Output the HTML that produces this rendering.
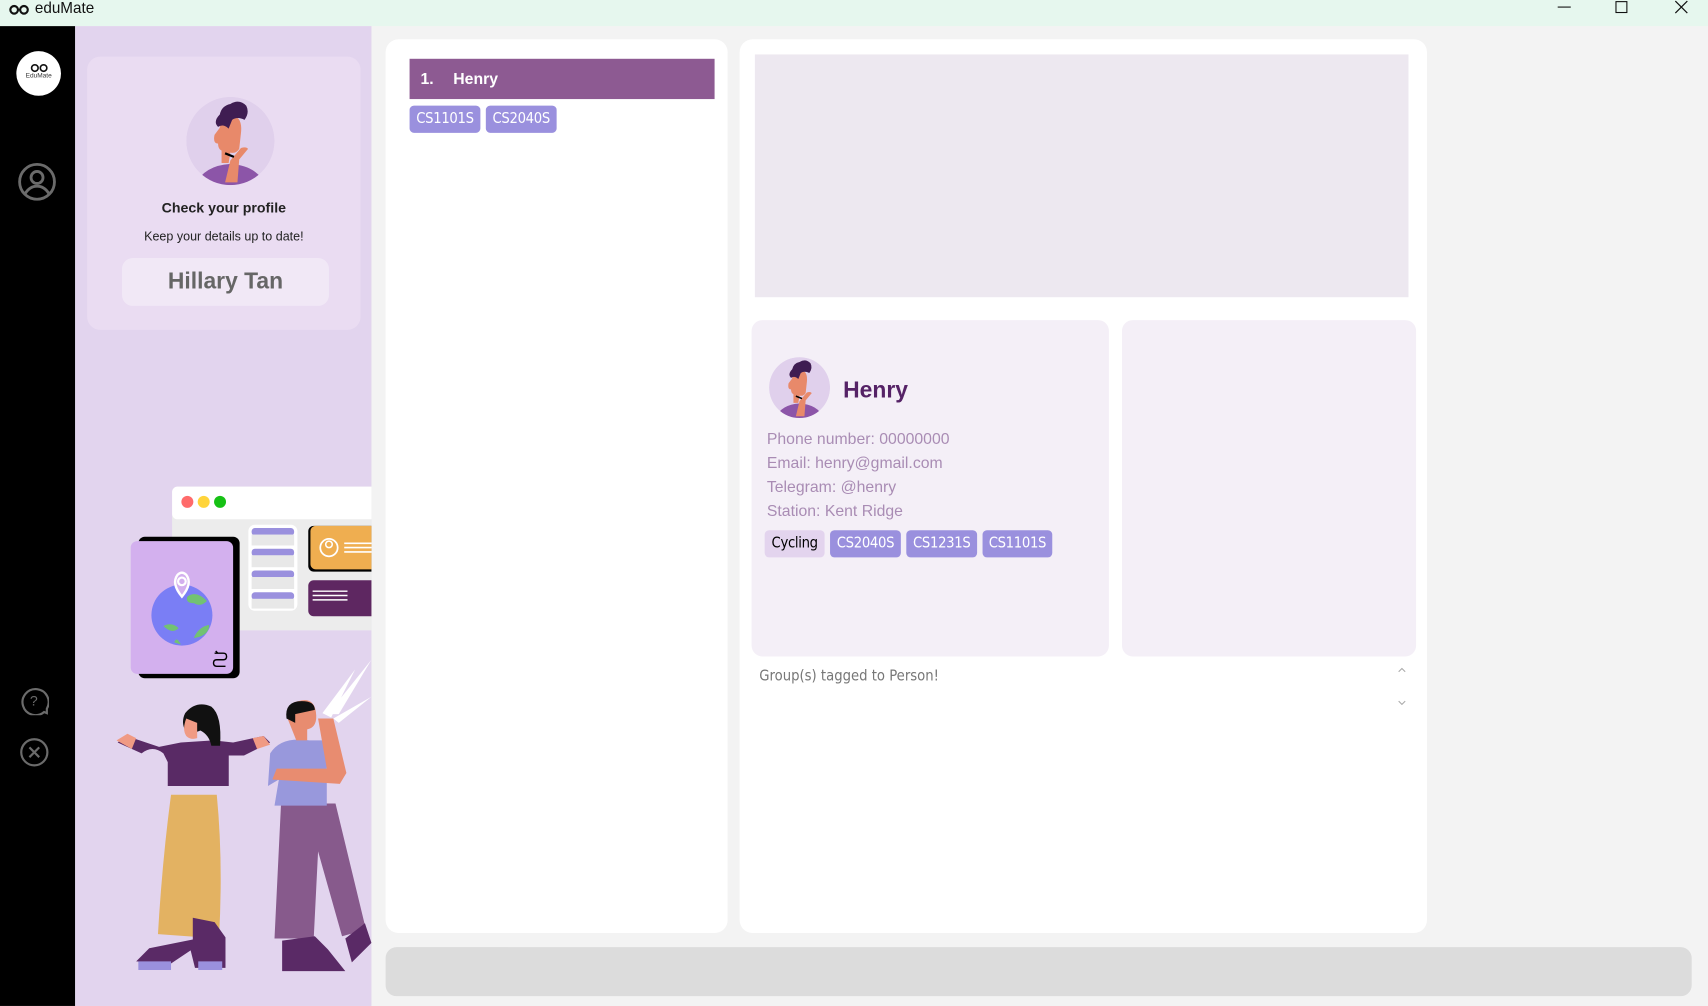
<!DOCTYPE html>
<html><head><meta charset="utf-8"><style>
*{margin:0;padding:0;box-sizing:border-box}
html,body{width:1708px;height:1006px;overflow:hidden;background:#f3f3f3;font-family:"Liberation Sans",sans-serif}
#w{position:absolute;left:0;top:0;width:1568px;height:924px;transform:scale(1.0893,1.0887);transform-origin:0 0}
.a{position:absolute}
.tag{position:absolute;height:25px;border-radius:4px;background:#9a90de;color:#fff;font-size:13.5px;line-height:25px;text-align:center;font-family:"DejaVu Sans Condensed","Liberation Sans",sans-serif;letter-spacing:-0.3px}
.info{position:absolute;left:704px;font-size:14.5px;color:#a98cb4;top:0}
</style></head><body><div id="w">
<div class="a" style="left:0;top:0;width:1568px;height:24px;background:#e6f7ee"></div>
<svg class="a" style="left:8px;top:3px" width="20" height="12" viewBox="0 0 20 12"><circle cx="5" cy="6" r="3.5" fill="none" stroke="#111" stroke-width="2"/><circle cx="14" cy="6" r="3.5" fill="none" stroke="#111" stroke-width="2"/><path d="M8 6h3" stroke="#111" stroke-width="1.5"/></svg>
<div class="a" style="left:32px;top:0;font-size:14px;line-height:15px;color:#111">eduMate</div>
<div class="a" style="left:1430px;top:6px;width:12px;height:1px;background:#111"></div>
<div class="a" style="left:1483px;top:1px;width:11px;height:11px;border:1px solid #111"></div>
<svg class="a" style="left:1537px;top:0" width="13" height="13"><path d="M1 1L12 12M12 1L1 12" stroke="#111" stroke-width="1.1"/></svg>
<div class="a" style="left:0;top:24px;width:69px;height:900px;background:#000"></div>
<div class="a" style="left:15px;top:47px;width:41px;height:41px;border-radius:50%;background:#fff"></div>
<svg class="a" style="left:28px;top:58px" width="16" height="9"><circle cx="4" cy="4.5" r="3" fill="none" stroke="#111" stroke-width="1.5"/><circle cx="12" cy="4.5" r="3" fill="none" stroke="#111" stroke-width="1.5"/></svg>
<div class="a" style="left:15px;top:67px;width:41px;text-align:center;font-size:6px;color:#333">EduMate</div>
<svg class="a" style="left:16px;top:149px" width="36" height="36" viewBox="0 0 36 36" fill="none" stroke="#6b6b6b" stroke-width="2.6"><circle cx="18" cy="18" r="16"/><circle cx="18" cy="14" r="5.5"/><path d="M7 29c3-5 7-7 11-7s8 2 11 7"/></svg>
<svg class="a" style="left:17px;top:629px" width="28" height="28" viewBox="0 0 28 28" fill="none" stroke="#6b6b6b" stroke-width="2"><path d="M26 26l-2.5-1A12 12 0 1 1 26 22z"/><text x="14" y="19" font-size="13" fill="#6b6b6b" stroke="none" text-anchor="middle" font-family="Liberation Sans">?</text></svg>
<svg class="a" style="left:18px;top:677px" width="28" height="28" viewBox="0 0 28 28" fill="none" stroke="#6b6b6b" stroke-width="2"><circle cx="13.5" cy="14" r="12"/><path d="M9 9.5l9 9M18 9.5l-9 9"/></svg>
<div class="a" style="left:69px;top:24px;width:272px;height:900px;background:#e2d4ee"></div>
<div class="a" style="left:80px;top:52px;width:251px;height:251px;border-radius:12px;background:#eadcf2"></div>
<svg class="a" style="left:171px;top:88px" width="81" height="83" viewBox="0 0 100 100"><defs><clipPath id="c1"><circle cx="50" cy="50" r="50"/></clipPath></defs><g clip-path="url(#c1)"><circle cx="50" cy="50" r="50" fill="#e0d0ec"/><path d="M10 100q10-22 40-24q30 2 40 24z" fill="#8c55a8"/><path d="M38 35q0-15 14-14q12 2 10 20l-2 18q-4 6-10 4l-2 12-8 0 0-14q-4-2-4-8q-6 0-4-10z" fill="#e8896a"/><path d="M50 72l12-14q6-2 8 1l-10 12-2 26-14 0z" fill="#e8896a"/><path d="M36 34q-6-6 2-14q2-10 12-12q10-6 18 2q4 8-2 16q-8-4-14 0l-4 10q-6-6-12-2z" fill="#3f1d52"/><path d="M44 64l10 4" stroke="#000" stroke-width="2.5"/></g></svg>
<div class="a" style="left:80px;top:183px;width:251px;text-align:center;font-size:13px;font-weight:bold;color:#222">Check your profile</div>
<div class="a" style="left:80px;top:212px;width:251px;text-align:center;font-size:11.5px;color:#222">Keep your details up to date!</div>
<div class="a" style="left:112px;top:237px;width:190px;height:44px;border-radius:10px;background:#f1e8f6;text-align:center;line-height:44px;font-size:21px;font-weight:bold;color:#666">Hillary Tan</div>
<svg class="a" style="left:69px;top:440px" width="272" height="484" viewBox="69 440 272 484">
<rect x="158" y="447" width="200" height="132" rx="5" fill="#ececec"/>
<rect x="158" y="447" width="200" height="30" rx="5" fill="#fff"/>
<circle cx="172" cy="461" r="5.5" fill="#ff6b6b"/><circle cx="187" cy="461" r="5.5" fill="#ffd43a"/><circle cx="202" cy="461" r="5.5" fill="#16c115"/>
<rect x="228" y="482" width="45" height="79" rx="6" fill="#fff"/>
<g fill="#9a90de"><rect x="231" y="485" width="39" height="7" rx="3"/><rect x="231" y="504" width="39" height="7" rx="3"/><rect x="231" y="524" width="39" height="7" rx="3"/><rect x="231" y="544" width="39" height="7" rx="3"/></g>
<g fill="#e8e8e8"><rect x="231" y="491" width="39" height="10"/><rect x="231" y="510" width="39" height="11"/><rect x="231" y="530" width="39" height="11"/><rect x="231" y="550" width="39" height="9"/></g>
<rect x="283" y="483" width="70" height="42" rx="5" fill="#000"/><rect x="285" y="483" width="70" height="40" rx="5" fill="#efae50"/>
<circle cx="302" cy="503" r="8" fill="none" stroke="#fff" stroke-width="1.6"/><circle cx="302" cy="500" r="3" fill="none" stroke="#fff" stroke-width="1.4"/>
<path d="M316 499h30M316 503h30M316 507h30" stroke="#fff" stroke-width="1.5"/>
<rect x="283" y="533" width="70" height="33" rx="5" fill="#5e2761"/><path d="M287 543h32M287 547h32M287 551h32" stroke="#fff" stroke-width="1.3"/>
<rect x="127" y="493" width="93" height="130" rx="6" fill="#000"/>
<rect x="120" y="497" width="94" height="122" rx="6" fill="#d3b0ee"/>
<circle cx="167" cy="565" r="28" fill="#7a7ef5"/>
<path d="M150 575q8-4 14 2q-6 6-14-2zM160 590q2-6 6 2zM172 548q8-6 18 4q-6 6-12 2q-8 0-6-6zM178 586q4-10 14-12q0 10-14 12z" fill="#72c272"/>
<path d="M167 548q-10-12-4-20q4-4 8 0q6 8-4 20z" fill="#d3b0ee" stroke="#fff" stroke-width="2.2"/><circle cx="167" cy="534" r="3.5" fill="none" stroke="#fff" stroke-width="2"/>
<path d="M197 600h8q3 0 3 3t-3 3h-6q-3 0-3 3t3 3h8M200 600l-2-2" fill="none" stroke="#000" stroke-width="1.3"/>
<path d="M296 655l30-40-22 44zM301 656l40-50-30 50zM306 660l35-20-30 24z" fill="#fff"/>
<path d="M157 730q-8 60-12 128l56 4q4-70-2-132z" fill="#e3b262"/>
<path d="M177 843l0 20-40 8-12 12 32 2 18-12 4 16 28 0 0-28-10-14z" fill="#5a2a66"/>
<path d="M127 883h30v8h-30zM182 883h22v8h-22z" fill="#9a90de"/>
<path d="M150 692q-10-8-20 0l-22-10 8-6 30 10 20-4 30-2 18 2 28-6 6 6-24 12-14 0 0 28-56 0 0-22z" fill="#592a65"/>
<path d="M107 680l10-6 8 4-4 10zM232 678l10-2 6 8-12 4z" fill="#f09a84"/>
<path d="M170 655q10-12 24-6q10 8 8 36l-8 0q-2-10-10-14q-10 4-14 0q-4-8 0-16z" fill="#111"/>
<path d="M171 660q-4 10 0 16q4 4 10 2l0-14z" fill="#f09a84"/>
<path d="M258 738l-6 124 36 0 4-80 22 78 22-6-28-116z" fill="#875a8c"/>
<path d="M259 864l30-4 12 12 16 20-58 0zM317 862l18-14 6 18-18 18z" fill="#5a2a66"/>
<path d="M248 692q10-16 36-12l16 0 0 60-48 0 4-24-10 6z" fill="#9898dc"/>
<path d="M250 716l62 4 6-10-12-50-14 0 8 46-46 0z" fill="#e88c70"/>
<path d="M264 660q-2-14 10-16q14-4 16 10q2 14-8 16l0 10-10 0z" fill="#e88c70"/>
<path d="M263 660q-2-16 14-16q12 0 12 8l-18 4 0 8z" fill="#111"/>
</svg>
<div class="a" style="left:354px;top:36px;width:314px;height:821px;border-radius:12px;background:#fff"></div>
<div class="a" style="left:376px;top:54px;width:280px;height:37px;background:#8d5a92;color:#fff;font-weight:bold;font-size:14.5px;line-height:38px"><span style="margin-left:10px">1.</span><span style="margin-left:18px">Henry</span></div>
<div class="tag" style="left:376px;top:97px;width:65px">CS1101S</div>
<div class="tag" style="left:446px;top:97px;width:65px">CS2040S</div>
<div class="a" style="left:679px;top:36px;width:631px;height:821px;border-radius:12px;background:#fff"></div>
<div class="a" style="left:693px;top:50px;width:600px;height:223px;background:#ede8f0"></div>
<div class="a" style="left:690px;top:294px;width:328px;height:309px;border-radius:10px;background:#f4eff7"></div>
<div class="a" style="left:1030px;top:294px;width:270px;height:309px;border-radius:10px;background:#f4eff7"></div>
<svg class="a" style="left:706px;top:327px" width="56" height="58" viewBox="0 0 100 100"><defs><clipPath id="c2"><circle cx="50" cy="50" r="50"/></clipPath></defs><g clip-path="url(#c2)"><circle cx="50" cy="50" r="50" fill="#e0d0ec"/><path d="M10 100q10-22 40-24q30 2 40 24z" fill="#8c55a8"/><path d="M38 35q0-15 14-14q12 2 10 20l-2 18q-4 6-10 4l-2 12-8 0 0-14q-4-2-4-8q-6 0-4-10z" fill="#e8896a"/><path d="M50 72l12-14q6-2 8 1l-10 12-2 26-14 0z" fill="#e8896a"/><path d="M36 34q-6-6 2-14q2-10 12-12q10-6 18 2q4 8-2 16q-8-4-14 0l-4 10q-6-6-12-2z" fill="#3f1d52"/><path d="M44 64l10 4" stroke="#000" stroke-width="2.5"/></g></svg>
<div class="a" style="left:774px;top:347px;font-size:21px;font-weight:bold;color:#552266">Henry</div>
<div class="info" style="top:396px">Phone number: 00000000</div>
<div class="info" style="top:418px">Email: henry@gmail.com</div>
<div class="info" style="top:440px">Telegram: @henry</div>
<div class="info" style="top:462px">Station: Kent Ridge</div>
<div class="tag" style="left:702px;top:487px;width:55px;background:#e3d4ee;color:#000">Cycling</div>
<div class="tag" style="left:762px;top:487px;width:65px">CS2040S</div>
<div class="tag" style="left:832px;top:487px;width:65px">CS1231S</div>
<div class="tag" style="left:902px;top:487px;width:64px">CS1101S</div>
<div class="a" style="left:697px;top:613px;font-size:13.5px;color:#777;font-family:'DejaVu Sans Condensed','Liberation Sans',sans-serif">Group(s) tagged to Person!</div>
<svg class="a" style="left:1282px;top:610px" width="10" height="40"><path d="M2 7l3-3 3 3M2 34l3 3 3-3" fill="none" stroke="#aaa" stroke-width="1"/></svg>
<div class="a" style="left:354px;top:870px;width:1199px;height:45px;border-radius:10px;background:#dcdcdc"></div>
</div></body></html>
